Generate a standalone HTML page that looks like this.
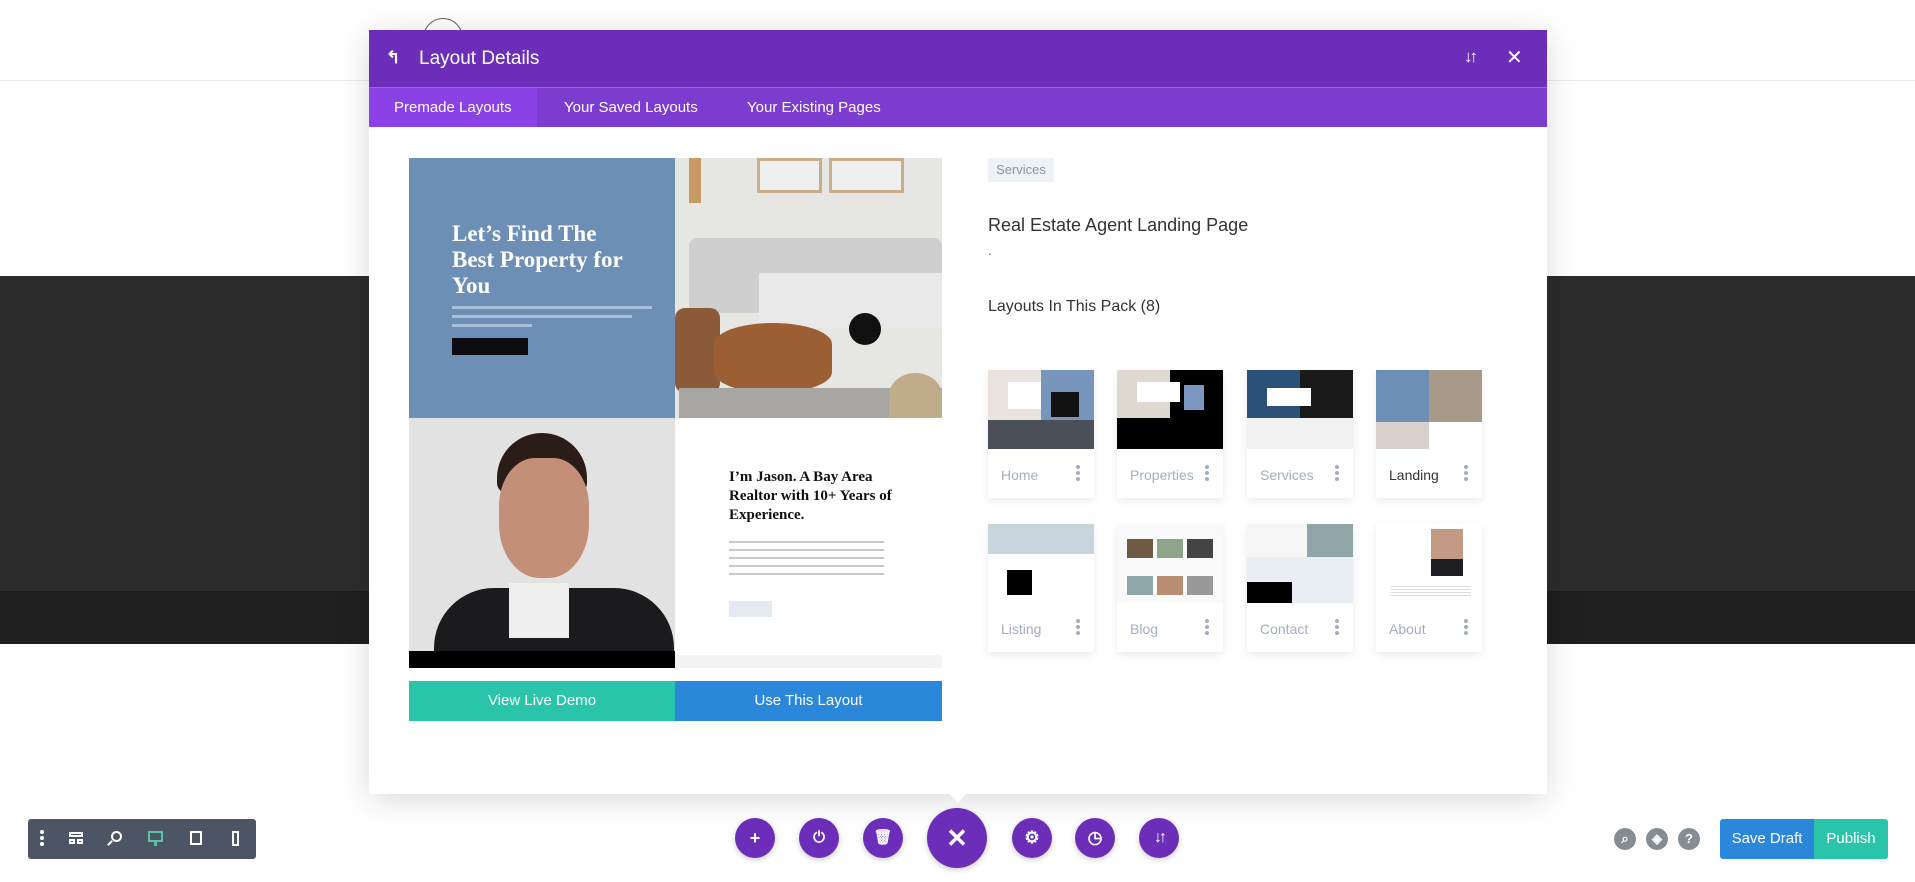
<!DOCTYPE html>
<html><head><meta charset="utf-8"><style>
*{margin:0;padding:0;box-sizing:border-box}
body{width:1915px;height:882px;position:relative;overflow:hidden;background:#fff;font-family:"Liberation Sans",sans-serif}
.a{position:absolute}
.serif{font-family:"Liberation Serif",serif;font-weight:bold}
.card{position:absolute;width:106px;height:128px;background:#fff;box-shadow:0 3px 8px rgba(0,0,0,.08)}
.card .img{position:absolute;left:0;top:0;width:106px;height:79px;overflow:hidden}
.card .lb{position:absolute;left:13px;top:97px;font-size:14px;color:#a3aec0}
.card .dots{position:absolute;right:14px;top:95px;width:4px}
.card .dots i{display:block;width:4px;height:4px;border-radius:2px;background:#a3aec0;margin-bottom:2px}
.cb{position:absolute;top:818px;width:40px;height:40px;border-radius:50%;background:#6c2eb9;color:#fff;text-align:center;line-height:40px;font-size:18px;font-weight:bold;box-shadow:0 2px 6px rgba(0,0,0,.2)}
.gc{position:absolute;top:828px;width:22px;height:22px;border-radius:50%;background:#868c94;color:#fff;font-size:13px;font-weight:bold;text-align:center;line-height:22px}
</style></head><body>
<div class="a" style="left:0;top:0;width:1915px;height:81px;background:#fff;border-bottom:1px solid #e6e9ee"></div>
<div class="a" style="left:423px;top:18px;width:40px;height:40px;border-radius:50%;border:1px solid #666"></div>
<div class="a" style="left:0;top:276px;width:1915px;height:315px;background:#2c2c2c"></div>
<div class="a" style="left:0;top:591px;width:1915px;height:53px;background:#1f1f1f"></div>

<!-- modal -->
<div class="a" style="left:369px;top:30px;width:1178px;height:764px;background:#fff;box-shadow:0 5px 30px rgba(0,0,0,.15)">
 <div class="a" style="left:0;top:0;width:1178px;height:57px;background:#6c2eb9"></div>
 <div class="a" style="left:17px;top:18px;color:#fff;font-size:17px;font-weight:bold">&#x21B0;</div>
 <div class="a" style="left:50px;top:18px;color:#fff;font-size:19px">Layout Details</div>
 <div class="a" style="left:1095px;top:17px;color:#fff;font-size:17px;font-weight:bold;letter-spacing:-3px">↓↑</div>
 <div class="a" style="left:1137px;top:15px;color:#fff;font-size:20px">✕</div>
 <div class="a" style="left:0;top:57px;width:1178px;height:40px;background:#7b3ccf;border-top:1px solid #9a66e0"></div>
 <div class="a" style="left:0;top:58px;width:168px;height:39px;background:#8a42e6"></div>
 <div class="a" style="left:25px;top:69px;color:#fff;font-size:15px">Premade Layouts</div>
 <div class="a" style="left:195px;top:69px;color:#fff;font-size:15px">Your Saved Layouts</div>
 <div class="a" style="left:378px;top:69px;color:#fff;font-size:15px">Your Existing Pages</div>

 <!-- preview -->
 <div class="a" style="left:40px;top:128px;width:533px;height:523px;overflow:hidden;background:#fff">
  <div class="a" style="left:0;top:0;width:266px;height:260px;background:#6e8fb5"></div>
  <div class="a serif" style="left:43px;top:63px;color:#fff;font-size:23px;line-height:26px">Let’s Find The<br>Best Property for<br>You</div>
  <div class="a" style="left:43px;top:148px;width:200px;height:3px;background:#a9bfd8"></div>
  <div class="a" style="left:43px;top:157px;width:180px;height:3px;background:#a9bfd8"></div>
  <div class="a" style="left:43px;top:166px;width:80px;height:3px;background:#a9bfd8"></div>
  <div class="a" style="left:43px;top:180px;width:76px;height:17px;background:#0c0c12"></div>
  <div class="a" style="left:266px;top:0;width:267px;height:260px;background:#e6e6e3"></div>
  <div class="a" style="left:348px;top:0;width:65px;height:35px;border:3px solid #c9ad8a;background:#eef0ef"></div>
  <div class="a" style="left:420px;top:0;width:75px;height:35px;border:3px solid #c9ad8a;background:#eef0ef"></div>
  <div class="a" style="left:280px;top:0;width:12px;height:45px;background:#c99a63"></div>
  <div class="a" style="left:280px;top:80px;width:253px;height:75px;background:#cfcfcf;border-radius:8px"></div>
  <div class="a" style="left:350px;top:115px;width:183px;height:55px;background:#e9e9e9"></div>
  <div class="a" style="left:266px;top:150px;width:45px;height:85px;background:#8b5a38;border-radius:10px"></div>
  <div class="a" style="left:305px;top:165px;width:118px;height:70px;background:#9c5f34;border-radius:50%/30%"></div>
  <div class="a" style="left:270px;top:230px;width:263px;height:30px;background:#a8a6a2"></div>
  <div class="a" style="left:480px;top:215px;width:53px;height:45px;background:#c0ab8a;border-radius:50% 50% 0 0"></div>
  <div class="a" style="left:440px;top:155px;width:32px;height:32px;border-radius:50%;background:#111"></div>
  <div class="a" style="left:0;top:260px;width:266px;height:240px;background:#e2e2e2"></div>
  <div class="a" style="left:88px;top:275px;width:90px;height:60px;background:#2a1c16;border-radius:45px 45px 10px 10px"></div>
  <div class="a" style="left:90px;top:300px;width:90px;height:120px;background:#c38f78;border-radius:40% 40% 45% 45%"></div>
  <div class="a" style="left:25px;top:430px;width:240px;height:75px;background:#1b1b1d;border-radius:60px 60px 0 0"></div>
  <div class="a" style="left:100px;top:425px;width:60px;height:55px;background:#eee"></div>
  <div class="a" style="left:0;top:493px;width:266px;height:17px;background:#000"></div>
  <div class="a" style="left:266px;top:260px;width:267px;height:250px;background:#fff"></div>
  <div class="a serif" style="left:320px;top:310px;color:#111;font-size:15px;line-height:19px">I’m Jason. A Bay Area<br>Realtor with 10+ Years of<br>Experience.</div>
  <div class="a" style="left:320px;top:383px;width:155px;height:40px;background:repeating-linear-gradient(#c8c8c8 0 2px,transparent 2px 8px)"></div>
  <div class="a" style="left:320px;top:443px;width:43px;height:16px;background:#e3eaf2"></div>
  <div class="a" style="left:266px;top:497px;width:267px;height:13px;background:#f4f4f4"></div>
 </div>
 <div class="a" style="left:40px;top:651px;width:266px;height:40px;background:#29c4a9;color:#fff;font-size:15px;text-align:center;line-height:40px">View Live Demo</div>
 <div class="a" style="left:306px;top:651px;width:267px;height:40px;background:#2b87da;color:#fff;font-size:15px;text-align:center;line-height:40px">Use This Layout</div>

 <!-- right side -->
 <div class="a" style="left:619px;top:128px;width:66px;height:24px;background:#eef1f5;color:#8a94a6;font-size:13px;line-height:24px;text-align:center">Services</div>
 <div class="a" style="left:619px;top:185px;color:#333;font-size:18px">Real Estate Agent Landing Page</div>
 <div class="a" style="left:619px;top:213px;color:#666;font-size:13px">.</div>
 <div class="a" style="left:619px;top:268px;color:#333;font-size:16px">Layouts In This Pack (8)</div>

 <div class="card" style="left:619px;top:340px"><div class="img" style="background:linear-gradient(90deg,#e8e4dd 50%,#7895bb 50%)"><div class="a" style="left:0;top:50px;width:106px;height:29px;background:#4a4f58"></div><div class="a" style="left:20px;top:12px;width:33px;height:27px;background:#fff"></div><div class="a" style="left:63px;top:22px;width:28px;height:25px;background:#111"></div></div><div class="lb">Home</div><div class="dots"><i></i><i></i><i></i></div></div>
 <div class="card" style="left:748px;top:340px"><div class="img" style="background:#000"><div class="a" style="left:0;top:0;width:53px;height:48px;background:#ddd8d0"></div><div class="a" style="left:20px;top:12px;width:43px;height:20px;background:#fff"></div><div class="a" style="left:67px;top:15px;width:20px;height:25px;background:#7a97bf"></div></div><div class="lb">Properties</div><div class="dots"><i></i><i></i><i></i></div></div>
 <div class="card" style="left:878px;top:340px"><div class="img" style="background:#f1f1f1"><div class="a" style="left:0;top:0;width:53px;height:48px;background:#2b5178"></div><div class="a" style="left:53px;top:0;width:53px;height:48px;background:#1a1a1a"></div><div class="a" style="left:20px;top:18px;width:44px;height:18px;background:#fff"></div></div><div class="lb">Services</div><div class="dots"><i></i><i></i><i></i></div></div>
 <div class="card" style="left:1007px;top:340px"><div class="img" style="background:#fff"><div class="a" style="left:0;top:0;width:53px;height:52px;background:#6e8fb5"></div><div class="a" style="left:53px;top:0;width:53px;height:52px;background:#a89a88"></div><div class="a" style="left:0;top:52px;width:53px;height:27px;background:#d9d0cb"></div></div><div class="lb" style="color:#333">Landing</div><div class="dots"><i></i><i></i><i></i></div></div>

 <div class="card" style="left:619px;top:494px"><div class="img" style="background:#fff"><div class="a" style="left:0;top:0;width:106px;height:30px;background:#c9d5dd"></div><div class="a" style="left:19px;top:46px;width:25px;height:25px;background:#000"></div></div><div class="lb">Listing</div><div class="dots"><i></i><i></i><i></i></div></div>
 <div class="card" style="left:748px;top:494px"><div class="img" style="background:#fafafa"><div class="a" style="left:10px;top:15px;width:26px;height:19px;background:#6f5a45"></div><div class="a" style="left:40px;top:15px;width:26px;height:19px;background:#8ea58c"></div><div class="a" style="left:70px;top:15px;width:26px;height:19px;background:#444"></div><div class="a" style="left:10px;top:52px;width:26px;height:19px;background:#8fa7a8"></div><div class="a" style="left:40px;top:52px;width:26px;height:19px;background:#b98d72"></div><div class="a" style="left:70px;top:52px;width:26px;height:19px;background:#999"></div></div><div class="lb">Blog</div><div class="dots"><i></i><i></i><i></i></div></div>
 <div class="card" style="left:878px;top:494px"><div class="img" style="background:#e8eef4"><div class="a" style="left:0;top:0;width:106px;height:33px;background:#f6f6f6"></div><div class="a" style="left:60px;top:0;width:46px;height:33px;background:#8fa5a8"></div><div class="a" style="left:0;top:58px;width:45px;height:21px;background:#000"></div></div><div class="lb">Contact</div><div class="dots"><i></i><i></i><i></i></div></div>
 <div class="card" style="left:1007px;top:494px"><div class="img" style="background:#fff"><div class="a" style="left:55px;top:5px;width:32px;height:47px;background:#c49a85"></div><div class="a" style="left:55px;top:35px;width:32px;height:17px;background:#1d1d22"></div><div class="a" style="left:15px;top:62px;width:80px;height:12px;background:repeating-linear-gradient(#ddd 0 1px,transparent 1px 3px)"></div></div><div class="lb">About</div><div class="dots"><i></i><i></i><i></i></div></div>
</div>
<div class="a" style="left:949px;top:793px;width:0;height:0;border-left:9px solid transparent;border-right:9px solid transparent;border-top:10px solid #fff"></div>

<!-- bottom left panel -->
<div class="a" style="left:28px;top:819px;width:228px;height:40px;background:#4b5563;border-radius:3px"></div>
<div class="a" style="left:40px;top:830px;width:4px"><i style="display:block;width:4px;height:4px;border-radius:2px;background:#fff;margin-bottom:2px"></i><i style="display:block;width:4px;height:4px;border-radius:2px;background:#fff;margin-bottom:2px"></i><i style="display:block;width:4px;height:4px;border-radius:2px;background:#fff"></i></div>
<div class="a" style="left:69px;top:832px;width:14px;height:5px;border:2px solid #fff"></div>
<div class="a" style="left:69px;top:839px;width:6px;height:5px;border:2px solid #fff"></div>
<div class="a" style="left:77px;top:839px;width:6px;height:5px;border:2px solid #fff"></div>
<div class="a" style="left:111px;top:831px;width:11px;height:11px;border:2px solid #fff;border-radius:50%"></div>
<div class="a" style="left:107px;top:842px;width:6px;height:2px;background:#fff;transform:rotate(-45deg)"></div>
<div class="a" style="left:148px;top:831px;width:15px;height:11px;border:2px solid #5ec2a8"></div>
<div class="a" style="left:154px;top:842px;width:3px;height:4px;background:#5ec2a8"></div>
<div class="a" style="left:190px;top:831px;width:12px;height:14px;border:2px solid #fff"></div>
<div class="a" style="left:232px;top:831px;width:7px;height:15px;border:2px solid #fff"></div>

<!-- center buttons -->
<div class="cb" style="left:735px">+</div>
<div class="cb" style="left:799px;font-size:15px">⏻</div>
<div class="cb" style="left:863px;font-size:15px">🗑</div>
<div class="cb" style="left:927px;top:808px;width:60px;height:60px;line-height:60px;font-size:26px">✕</div>
<div class="cb" style="left:1012px;font-size:17px">⚙</div>
<div class="cb" style="left:1075px;font-size:17px">◷</div>
<div class="cb" style="left:1139px;font-size:16px;letter-spacing:-3px">↓↑</div>

<!-- right -->
<div class="gc" style="left:1614px">⌕</div>
<div class="gc" style="left:1646px">◈</div>
<div class="gc" style="left:1678px">?</div>
<div class="a" style="left:1720px;top:819px;width:94px;height:40px;background:#2b87da;color:#fff;font-size:15px;text-align:center;line-height:40px;border-radius:3px 0 0 3px">Save Draft</div>
<div class="a" style="left:1814px;top:819px;width:74px;height:40px;background:#29c4a9;color:#fff;font-size:15px;text-align:center;line-height:40px;border-radius:0 3px 3px 0">Publish</div>
</body></html>
